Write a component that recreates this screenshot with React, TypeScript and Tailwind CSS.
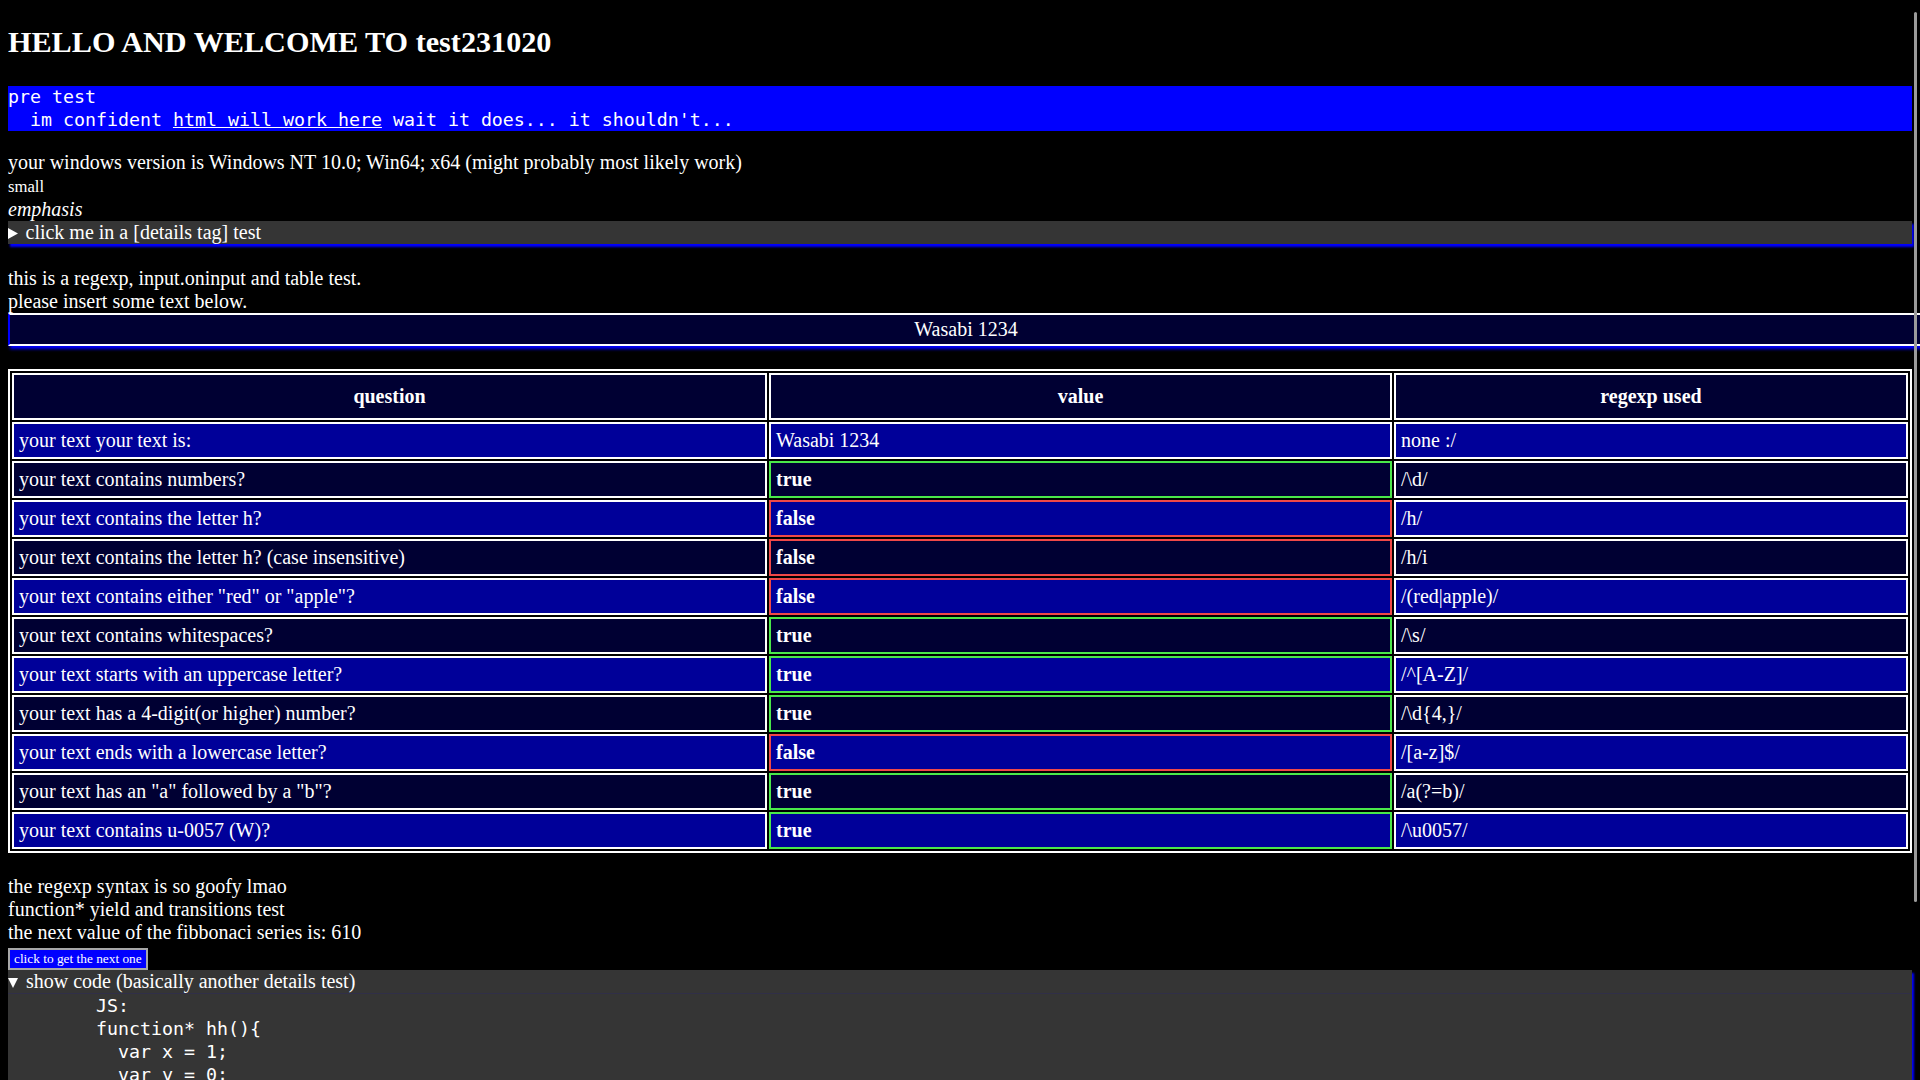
const rows = [
  { q: 'your text your text is:', v: 'Wasabi 1234', r: 'none :/', kind: 'plain' },
  { q: 'your text contains numbers?', v: 'true', r: '/\\d/', kind: 'true' },
  { q: 'your text contains the letter h?', v: 'false', r: '/h/', kind: 'false' },
  { q: 'your text contains the letter h? (case insensitive)', v: 'false', r: '/h/i', kind: 'false' },
  { q: 'your text contains either "red" or "apple"?', v: 'false', r: '/(red|apple)/', kind: 'false' },
  { q: 'your text contains whitespaces?', v: 'true', r: '/\\s/', kind: 'true' },
  { q: 'your text starts with an uppercase letter?', v: 'true', r: '/^[A-Z]/', kind: 'true' },
  { q: 'your text has a 4-digit(or higher) number?', v: 'true', r: '/\\d{4,}/', kind: 'true' },
  { q: 'your text ends with a lowercase letter?', v: 'false', r: '/[a-z]$/', kind: 'false' },
  { q: 'your text has an "a" followed by a "b"?', v: 'true', r: '/a(?=b)/', kind: 'true' },
  { q: 'your text contains u-0057 (W)?', v: 'true', r: '/\\u0057/', kind: 'true' },
];

const valueBorder: Record<string, string> = {
  plain: 'border-white font-normal',
  true: 'border-[#4ae84a] font-bold',
  false: 'border-[#f04848] font-bold',
};

const code = `        JS:
        function* hh(){
          var x = 1;
          var y = 0;
          while(true){
            var z = x + y;
            y = x;
            x = z;
            yield z;
          }
        }`;

// the native disclosure marker comes out too wide, so draw our own
const Marker = ({ open }: { open?: boolean }) =>
  open ? (
    <svg width="10" height="10" viewBox="0 0 10 10" className="mr-[8px] inline-block align-[0px]">
      <polygon points="0,0 10,0 5,10" fill="white" />
    </svg>
  ) : (
    <svg width="10" height="11" viewBox="0 0 10 11" className="mr-[7.5px] inline-block align-[0px]">
      <polygon points="0,0 10,5.5 0,11" fill="white" />
    </svg>
  );

export default function App() {
  return (
    <div className="relative h-[1080px] w-[1920px] overflow-hidden bg-black px-2 font-['Liberation_Serif',serif] text-[20px] leading-[23px] text-white">
      <h1 className="mt-[24px] text-[30.2px] font-bold leading-[37px]">HELLO AND WELCOME TO test231020</h1>

      <pre className="mt-[25px] whitespace-pre bg-[#0000ff] font-['DejaVu_Sans_Mono',monospace] text-[18.27px] leading-[22.5px] text-white">
        {'pre test\n  im confident '}
        <u>html will work here</u>
        {" wait it does... it shouldn't..."}
      </pre>

      <div className="mt-[20px]">
        your windows version is Windows NT 10.0; Win64; x64 (might probably most likely work)
        <br />
        <small className="text-[16.67px]">small</small>
        <br />
        <em>emphasis</em>
      </div>

      <details className="bg-[#353535] shadow-[2px_3px_2px_#0000ff]">
        <summary className="block cursor-pointer list-none [&::-webkit-details-marker]:hidden">
          <Marker />
          click me in a [details tag] test
        </summary>
        <p>you found it</p>
      </details>

      <div className="mt-[23px]">
        this is a regexp, input.oninput and table test.
        <br />
        please insert some text below.
      </div>

      <input
        defaultValue="Wasabi 1234"
        className="block h-[33px] w-[1914px] border-y-2 border-r-0 border-l-2 border-y-white border-l-[#0000ff] bg-[#000033] text-center font-['Liberation_Serif',serif] text-[20px] text-white shadow-[2px_3px_3px_#0000ff] outline-none"
      />

      <table className="mt-[23px] w-[1904px] table-fixed border-separate border-spacing-[2px] border-2 border-white">
        <colgroup>
          <col className="w-[755px]" />
          <col className="w-[623px]" />
          <col className="w-[514px]" />
        </colgroup>
        <thead>
          <tr className="bg-[#000033]">
            <th className="border-2 border-white p-[10px] text-center font-bold">question</th>
            <th className="border-2 border-white p-[10px] text-center font-bold">value</th>
            <th className="border-2 border-white p-[10px] text-center font-bold">regexp used</th>
          </tr>
        </thead>
        <tbody>
          {rows.map((row, i) => (
            <tr key={row.q} className={i % 2 === 0 ? 'bg-[#000099]' : 'bg-[#000033]'}>
              <td className="border-2 border-white p-[5px] text-left">{row.q}</td>
              <td className={`border-2 p-[5px] text-left ${valueBorder[row.kind]}`}>{row.v}</td>
              <td className="border-2 border-white p-[5px] text-left">{row.r}</td>
            </tr>
          ))}
        </tbody>
      </table>

      <div className="mt-[22px]">
        the regexp syntax is so goofy lmao
        <br />
        function* yield and transitions test
        <br />
        the next value of the fibbonaci series is: 610
      </div>

      <button className="mt-[4px] block h-[22px] border-2 border-[#a8a8a8] bg-[#0000ff] px-[4px] font-['Liberation_Serif',serif] text-[13.33px] leading-[16px] text-white">
        click to get the next one
      </button>

      <details open className="bg-[#353535] shadow-[2px_3px_2px_#0000ff]">
        <summary className="block cursor-pointer list-none border-b border-[#302f48] [&::-webkit-details-marker]:hidden">
          <Marker open />
          show code (basically another details test)
        </summary>
        <pre className="whitespace-pre font-['DejaVu_Sans_Mono',monospace] text-[18.27px] leading-[23px]">{code}</pre>
      </details>

      <div className="absolute right-[3px] top-[12px] h-[890px] w-[3px] rounded-full bg-[#9b9b9b]" />
    </div>
  );
}
